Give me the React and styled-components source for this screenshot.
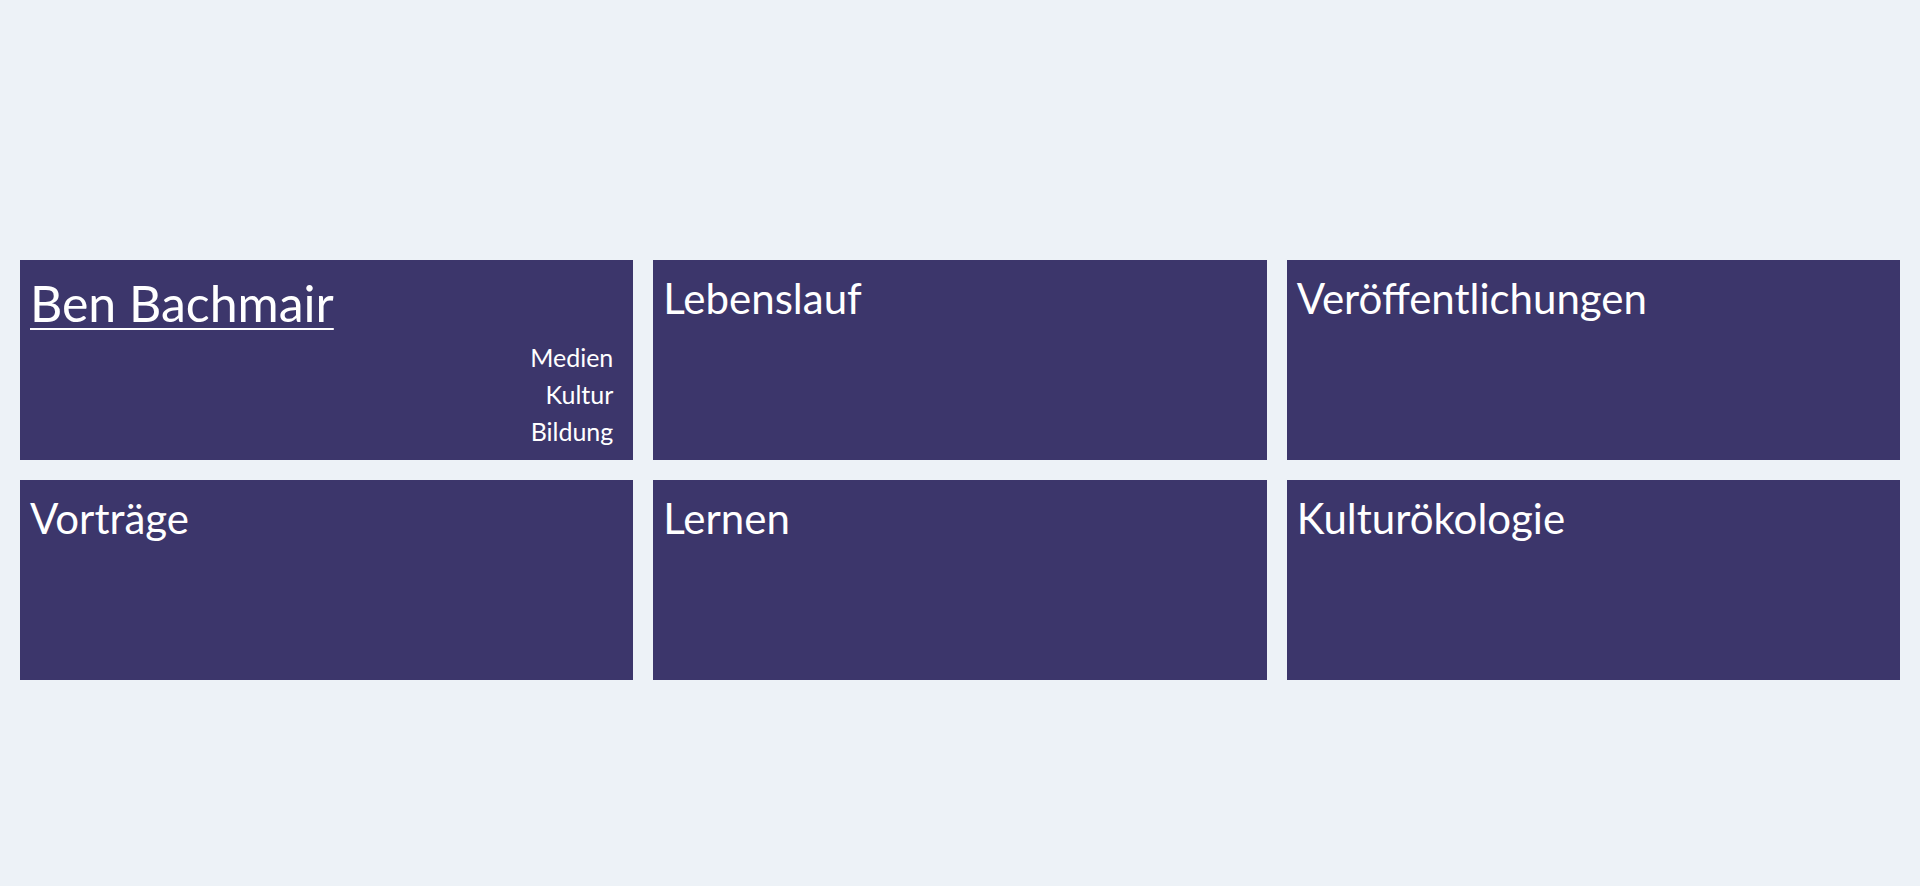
import React from "react";
import styled, { createGlobalStyle } from "styled-components";

const GlobalStyle = createGlobalStyle`
  html, body {
    margin: 0;
    padding: 0;
    background: #edf2f7;
    font-family: Lato, "Noto Sans", sans-serif;
  }
`;

const sections = ["Lebenslauf", "Veröffentlichungen", "Vorträge", "Lernen", "Kulturökologie"];

const App = () => {
  return (
    <Page>
      <GlobalStyle />
      <Grid>
        <Card>
          <Name href="#">Ben Bachmair</Name>
          <Tags>
            <span>Medien</span>
            <span>Kultur</span>
            <span>Bildung</span>
          </Tags>
        </Card>
        {sections.map((s) => (
          <Card key={s}>
            <Title>{s}</Title>
          </Card>
        ))}
      </Grid>
    </Page>
  );
};

const Page = styled.div`
  min-height: 100vh;
  box-sizing: border-box;
  padding: 260px 20px 0;
`;

const Grid = styled.div`
  display: grid;
  grid-template-columns: repeat(3, 1fr);
  grid-auto-rows: 200px;
  gap: 20px;
`;

const Card = styled.div`
  background: #3c366b;
  color: #ffffff;
  padding: 10px;
  display: flex;
  flex-direction: column;
  align-items: flex-start;
  box-sizing: border-box;
`;

const Name = styled.a`
  color: #ffffff;
  font-size: 50px;
  line-height: 67px;
  text-decoration: underline;
  text-decoration-thickness: 2px;
  text-underline-offset: 6px;
`;

const Title = styled.h2`
  margin: 0;
  font-size: 42px;
  line-height: 56px;
  font-weight: 400;
`;

const Tags = styled.div`
  margin-top: auto;
  align-self: flex-end;
  padding-right: 10px;
  display: flex;
  flex-direction: column;
  align-items: flex-end;
  font-size: 25px;
  line-height: 37px;
`;

export default App;
